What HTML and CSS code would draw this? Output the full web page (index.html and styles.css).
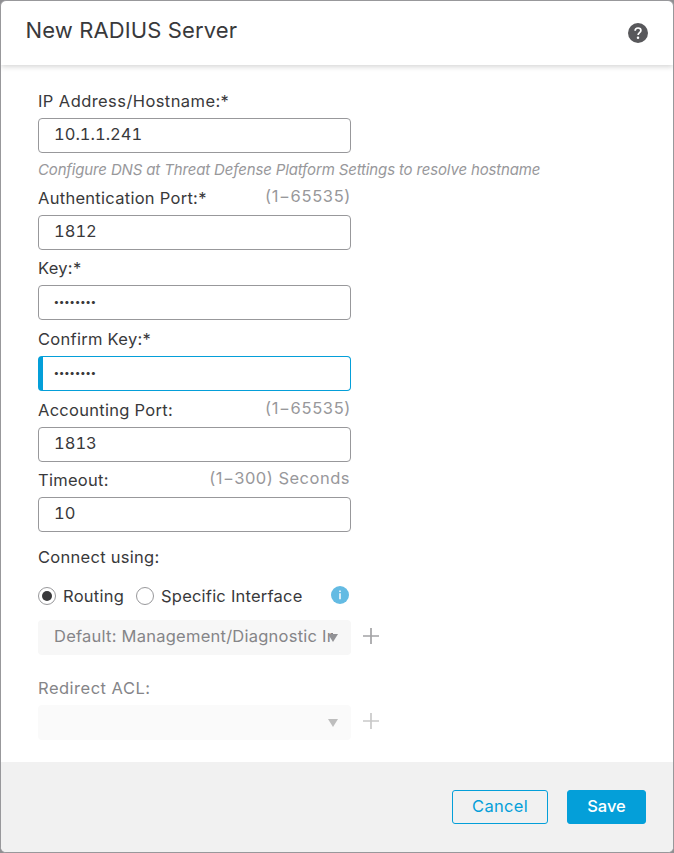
FILE: index.html
```html
<!DOCTYPE html>
<html lang="en">
<head>
<meta charset="utf-8">
<title>New RADIUS Server</title>
<link rel="stylesheet" href="styles.css">
</head>
<body>
<main class="dialog">
  <header class="header">
    <h1 class="title">New RADIUS Server</h1>
    <svg class="help" viewBox="0 0 20 20" aria-label="Help"><circle cx="10" cy="10" r="10" fill="#58585b"/><path d="M7.1 7.7C7.2 5.8 8.3 5 10 5c1.7 0 2.9.9 2.9 2.4 0 2.1-2.8 2.2-2.8 4.5" fill="none" stroke="#fff" stroke-width="1.7"/><circle cx="10" cy="14.8" r="1.25" fill="#fff"/></svg>
  </header>
  <form class="body">
    <div class="label-row"><span class="label ip">IP Address/Hostname:*</span></div>
    <div class="input"><span class="num">10.1.1.241</span></div>
    <p class="hint"><span>Configure DNS at Threat Defense Platform Settings to resolve hostname</span></p>
    <div class="label-row"><span class="label">Authentication Port:*</span><span class="range">(1−65535)</span></div>
    <div class="input"><span class="num">1812</span></div>
    <div class="label-row"><span class="label">Key:*</span></div>
    <div class="input"><span class="dots">••••••••</span></div>
    <div class="label-row tall"><span class="label">Confirm Key:*</span></div>
    <div class="input focused"><span class="dots">••••••••</span></div>
    <div class="label-row tall"><span class="label">Accounting Port:</span><span class="range">(1−65535)</span></div>
    <div class="input"><span class="num">1813</span></div>
    <div class="label-row"><span class="label">Timeout:</span><span class="range seconds">(1−300) Seconds</span></div>
    <div class="input"><span class="num">10</span></div>
    <div class="connect"><span class="label">Connect using:</span></div>
    <div class="radios">
      <i class="radio checked"></i><span class="label routing">Routing</span>
      <i class="radio"></i><span class="label specific">Specific Interface</span>
      <svg class="info" viewBox="0 0 18 18" aria-label="Info"><circle cx="9" cy="9" r="9" fill="#64bbe3"/><path d="M9 7.3v6M9 4.4v1.7" stroke="#fff" stroke-width="1.5"/></svg>
    </div>
    <div class="select-row">
      <div class="select"><span class="select-text">Default: Management/Diagnostic Interface</span><svg class="arrow" viewBox="0 0 10 8"><path d="M0 0h10L5 8z" fill="#929296"/></svg></div>
      <svg class="plus" viewBox="0 0 16 16"><path d="M8 0v16M0 8h16" stroke="#a3a3a5" stroke-width="1.7"/></svg>
    </div>
    <div class="acl"><span class="label redirect">Redirect ACL:</span></div>
    <div class="select-row">
      <div class="select empty"><svg class="arrow" viewBox="0 0 10 8"><path d="M0 0h10L5 8z" fill="#bdbdbd"/></svg></div>
      <svg class="plus" viewBox="0 0 16 16"><path d="M8 0v16M0 8h16" stroke="#c9c9c9" stroke-width="1.7"/></svg>
    </div>
  </form>
  <footer class="footer">
    <button class="btn cancel">Cancel</button>
    <button class="btn save">Save</button>
  </footer>
</main>
</body>
</html>
```
FILE: styles.css
```css
* { box-sizing: border-box; }
body { margin: 0; background: #8f8f92; font-family: Inter, "Liberation Sans", sans-serif; font-size: 16.5px; color: #39393b; }
.dialog { width: 674px; height: 853px; border: 1px solid #98989b; border-radius: 6px; background: #fff; overflow: hidden; display: flex; flex-direction: column; }
.header { height: 64px; display: flex; align-items: center; justify-content: space-between; padding: 0 25px 0 24.5px; box-shadow: 0 2px 5px rgba(0,0,0,.16); }
.title { margin: 0 0 6px; font-size: 22px; line-height: 28px; font-weight: 400; letter-spacing: .12px; white-space: nowrap; }
.help { width: 20px; height: 20px; }
.body { flex: 1; padding: 18px 0 0 37px; }
.label-row { width: 313px; height: 35px; display: flex; justify-content: space-between; align-items: center; white-space: nowrap; }
.label-row.tall { height: 36px; padding-top: 1px; }
.label { line-height: 20px; letter-spacing: .28px; white-space: nowrap; }
.ip { letter-spacing: .42px; }
.redirect { letter-spacing: .5px; }
.range { line-height: 20px; color: #98989b; margin-bottom: 4px; letter-spacing: .65px; }
.seconds { letter-spacing: .5px; margin-right: 1px; }
.input { width: 313px; height: 35px; border: 1px solid #98989b; border-radius: 4px; padding: 0 0 3px 16px; display: flex; align-items: center; }
.input.focused { border-color: #049fd9; border-left-width: 5px; padding-left: 12px; }
.num { line-height: 20px; letter-spacing: 0; font-variant-numeric: tabular-nums; margin-left: -1px; }
.dots { font-size: 10px; font-weight: 700; letter-spacing: .55px; line-height: 10px; margin-left: -1px; }
.hint { margin: 0; height: 27px; padding-top: 7px; line-height: 20px; font-size: 15px; font-style: italic; letter-spacing: -.15px; color: #98989b; white-space: nowrap; }
.connect { height: 50px; display: flex; align-items: center; }
.radios { width: 313px; height: 38px; padding-bottom: 10px; display: flex; align-items: center; }
.radio { width: 18px; height: 18px; border: 1px solid #98989b; border-radius: 50%; display: grid; place-items: center; margin-right: 7px; flex: none; }
.radio.checked::after { content: ""; width: 10px; height: 10px; border-radius: 50%; background: #39393b; }
.routing { width: 73px; }
.specific { letter-spacing: .22px; }
.info { width: 18px; height: 18px; margin: 0 2px 2px auto; flex: none; }
.select-row { display: flex; align-items: center; gap: 12px; }
.select { width: 313px; height: 35px; border-radius: 4px; background: #f7f7f7; color: #858588; padding: 0 13px 0 16px; display: flex; align-items: center; }
.select-text { width: 279px; overflow: hidden; white-space: nowrap; line-height: 22px; letter-spacing: .24px; margin-bottom: 3px; flex: none; }
.arrow { width: 10px; height: 8px; margin-left: -5px; flex: none; }
.plus { width: 16px; height: 16px; margin-bottom: 4px; }
.select.empty { background: #fafafa; justify-content: flex-end; }
.acl { height: 50px; padding-top: 16px; display: flex; align-items: center; color: #858588; }
.footer { height: 90px; background: #f1f1f1; padding: 0 27px; display: flex; align-items: center; justify-content: flex-end; gap: 19px; }
.btn { height: 34px; font: 16.5px/28px Inter, "Liberation Sans", sans-serif; border: 1px solid #049fd9; border-radius: 3px; padding: 0 0 3px; }
.cancel { width: 96px; background: transparent; color: #049fd9; letter-spacing: .3px; }
.save { width: 79px; background: #049fd9; color: #fff; font-weight: 500; }
```
